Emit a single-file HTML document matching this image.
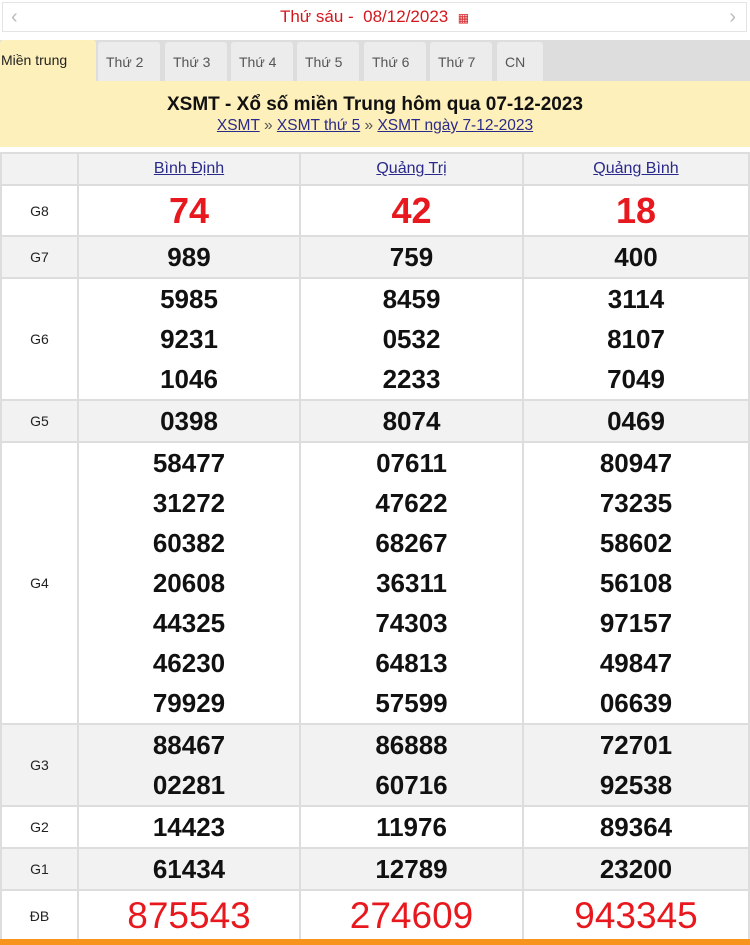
<!DOCTYPE html>
<html><head><meta charset="utf-8"><style>
*{margin:0;padding:0;box-sizing:border-box}
body{width:750px;height:945px;background:#fff;font-family:"Liberation Sans",Arial,sans-serif;position:relative;overflow:hidden}
.top{position:absolute;left:2px;top:2px;width:745px;height:30px;border:1px solid #e4e4e4;background:#fff;text-align:center;color:#d4171d;font-size:17px;line-height:28px}
.top .l,.top .r{position:absolute;top:0;color:#bbb;font-size:20px}
.tabs{position:absolute;left:0;top:40px;width:750px;height:41px;background:#ddd}
.tab{position:absolute;top:2px;height:39px;background:#ececec;font-size:14px;color:#555;line-height:40px;padding-left:8px;border-radius:3px 3px 0 0}
.tab.a{background:#fdf0bb;color:#222;left:0;top:0;height:41px;padding-left:1px;width:96px;line-height:40px}
.band{position:absolute;left:0;top:81px;width:750px;height:66px;background:#fdf0bb;text-align:center}
.band h1{font-size:19px;font-weight:bold;color:#111;margin-top:13px}
.band p{font-size:15.5px;color:#555;margin-top:1px}
.band a{color:#2a2a8a;text-decoration:underline}
table{position:absolute;left:0;top:152px;width:750px;border-collapse:collapse}
td{border:2px solid #ddd;text-align:center;font-weight:bold;font-size:26px;color:#111;line-height:40px}
td.g{width:77px;font-size:14px;font-weight:normal;color:#222}
tr.s td{background:#f2f2f2}
tr.h td{background:#f2f2f2;font-size:16px;font-weight:normal;line-height:26px}
tr.h a{color:#2a2a8a;text-decoration:underline}
.r8{color:#e8191e;font-size:36px}
.db{color:#e8191e;font-size:37px;font-weight:normal}
.bar{position:absolute;left:0;top:939px;width:750px;height:6px;background:#f7941d}
</style></head><body>
<div class="top"><span class="l" style="left:8px">‹</span>Thứ sáu -&nbsp; 08/12/2023 &nbsp;<span style="font-size:12px">▦</span><span class="r" style="right:10px">›</span></div>
<div class="tabs">
<div class="tab a">Miền trung</div>
<div class="tab" style="left:98px;width:62px">Thứ 2</div>
<div class="tab" style="left:165px;width:62px">Thứ 3</div>
<div class="tab" style="left:231px;width:62px">Thứ 4</div>
<div class="tab" style="left:297px;width:62px">Thứ 5</div>
<div class="tab" style="left:364px;width:62px">Thứ 6</div>
<div class="tab" style="left:430px;width:62px">Thứ 7</div>
<div class="tab" style="left:497px;width:46px">CN</div>
</div>
<div class="band"><h1>XSMT - Xổ số miền Trung hôm qua 07-12-2023</h1>
<p><a>XSMT</a> » <a>XSMT thứ 5</a> » <a>XSMT ngày 7-12-2023</a></p></div>
<table>
<tr class="h" style="height:32px"><td class="g"></td><td style="width:222px"><a>Bình Định</a></td><td style="width:223px"><a>Quảng Trị</a></td><td><a>Quảng Bình</a></td></tr>
<tr style="height:51px"><td class="g">G8</td><td class="r8">74</td><td class="r8">42</td><td class="r8">18</td></tr>
<tr class="s" style="height:42px"><td class="g">G7</td><td>989</td><td>759</td><td>400</td></tr>
<tr style="height:122px"><td class="g">G6</td><td>5985<br>9231<br>1046</td><td>8459<br>0532<br>2233</td><td>3114<br>8107<br>7049</td></tr>
<tr class="s" style="height:41px"><td class="g">G5</td><td>0398</td><td>8074</td><td>0469</td></tr>
<tr style="height:282px"><td class="g">G4</td><td>58477<br>31272<br>60382<br>20608<br>44325<br>46230<br>79929</td><td>07611<br>47622<br>68267<br>36311<br>74303<br>64813<br>57599</td><td>80947<br>73235<br>58602<br>56108<br>97157<br>49847<br>06639</td></tr>
<tr class="s" style="height:81px"><td class="g">G3</td><td>88467<br>02281</td><td>86888<br>60716</td><td>72701<br>92538</td></tr>
<tr style="height:42px"><td class="g">G2</td><td>14423</td><td>11976</td><td>89364</td></tr>
<tr class="s" style="height:42px"><td class="g">G1</td><td>61434</td><td>12789</td><td>23200</td></tr>
<tr style="height:52px"><td class="g">ĐB</td><td class="db">875543</td><td class="db">274609</td><td class="db">943345</td></tr>
</table>
<div class="bar"></div>
</body></html>
